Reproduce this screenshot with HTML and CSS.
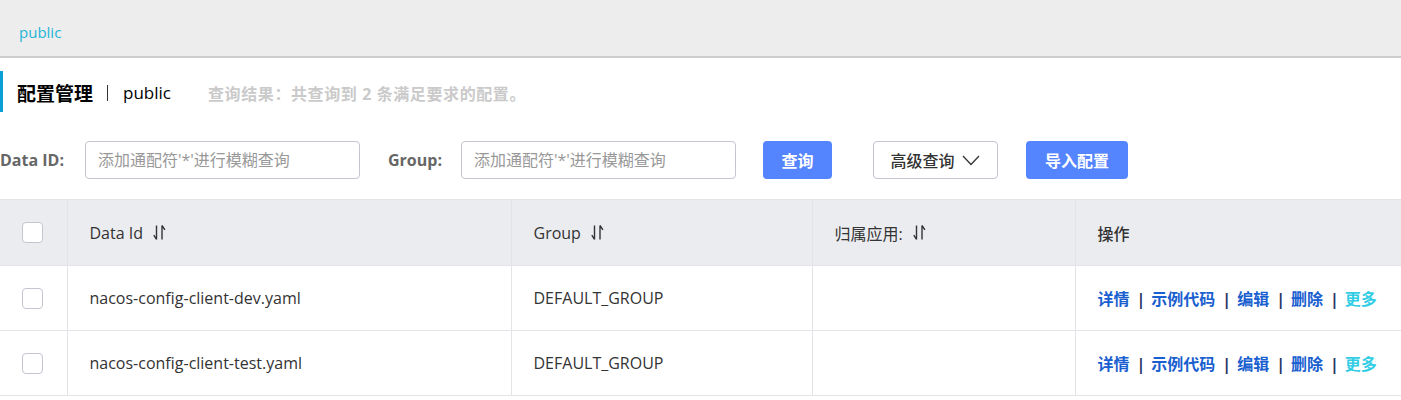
FILE: index.html
```html
<!DOCTYPE html>
<html lang="zh-CN">
<head>
<meta charset="utf-8">
<title>配置管理</title>
<link rel="stylesheet" href="styles.css">
</head>
<body>
<div class="topbar"><span class="ns-link">public</span></div>

<div class="page-title">
  <span class="title-main">配置管理</span>
  <span class="title-sep"></span>
  <span class="title-ns">public</span>
  <span class="title-summary">查询结果：共查询到 2 条满足要求的配置。</span>
</div>

<div class="search-row">
  <label class="field-label">Data ID:</label>
  <input class="text-input" type="text" placeholder="添加通配符'*'进行模糊查询">
  <label class="field-label group-label">Group:</label>
  <input class="text-input" type="text" placeholder="添加通配符'*'进行模糊查询">
  <button class="btn btn-primary btn-query">查询</button>
  <button class="btn btn-normal btn-advanced">高级查询
    <svg class="chev" width="18" height="11" viewBox="0 0 18 11"><path d="M1 1l8 8.5L17 1" stroke="#333" stroke-width="1.3" fill="none"/></svg>
  </button>
  <button class="btn btn-primary btn-import">导入配置</button>
</div>

<table class="cfg-table">
  <colgroup>
    <col class="c-check"><col class="c-id"><col class="c-group"><col class="c-app"><col>
  </colgroup>
  <thead>
    <tr>
      <th class="check-cell"><span class="checkbox"></span></th>
      <th><span class="th-inner">Data Id <svg class="sort" width="13" height="17" viewBox="0 0 13 17"><path d="M3.5 1.5v14M3.5 15.5L0.8 11.2M9 15.5v-14M9 1.5l2.9 4.3" stroke="#333" stroke-width="1.4" fill="none"/></svg></span></th>
      <th><span class="th-inner">Group <svg class="sort" width="13" height="17" viewBox="0 0 13 17"><path d="M3.5 1.5v14M3.5 15.5L0.8 11.2M9 15.5v-14M9 1.5l2.9 4.3" stroke="#333" stroke-width="1.4" fill="none"/></svg></span></th>
      <th><span class="th-inner">归属应用: <svg class="sort" width="13" height="17" viewBox="0 0 13 17"><path d="M3.5 1.5v14M3.5 15.5L0.8 11.2M9 15.5v-14M9 1.5l2.9 4.3" stroke="#333" stroke-width="1.4" fill="none"/></svg></span></th>
      <th class="th-op">操作</th>
    </tr>
  </thead>
  <tbody>
    <tr>
      <td class="check-cell"><span class="checkbox"></span></td>
      <td>nacos-config-client-dev.yaml</td>
      <td>DEFAULT_GROUP</td>
      <td></td>
      <td class="ops"><a>详情</a><span class="sep">|</span><a>示例代码</a><span class="sep">|</span><a>编辑</a><span class="sep">|</span><a>删除</a><span class="sep">|</span><a class="more">更多</a></td>
    </tr>
    <tr>
      <td class="check-cell"><span class="checkbox"></span></td>
      <td>nacos-config-client-test.yaml</td>
      <td>DEFAULT_GROUP</td>
      <td></td>
      <td class="ops"><a>详情</a><span class="sep">|</span><a>示例代码</a><span class="sep">|</span><a>编辑</a><span class="sep">|</span><a>删除</a><span class="sep">|</span><a class="more">更多</a></td>
    </tr>
  </tbody>
</table>
</body>
</html>
```
FILE: styles.css
```css
* { box-sizing: border-box; }
html, body { margin: 0; padding: 0; background: #fff; }
body {
  font-family: "Open Sans", "Noto Sans CJK SC", sans-serif;
  font-size: 16px;
  color: #333;
  overflow: hidden;
}

.topbar {
  height: 58px;
  background: #ededed;
  border-bottom: 2px solid #cdcdcd;
  display: flex;
  align-items: center;
  padding: 8px 0 0 19px;
}
.ns-link { color: #1fb5d7; font-size: 15px; }

.page-title {
  margin-top: 13px;
  height: 41px;
  border-left: 3px solid #0a9fd6;
  display: flex;
  align-items: center;
  padding: 2px 0 0 14px;
}
.title-main { font-size: 19px; font-weight: 700; color: #000; }
.title-sep {
  width: 1px; height: 16px; background: #333;
  margin: 0 15px 0 14px;
}
.title-ns { font-size: 17px; color: #000; }
.title-summary {
  margin-left: 37px;
  font-size: 16px;
  font-weight: 700;
  color: #cacaca;
  letter-spacing: 0.6px;
}

.search-row {
  margin-top: 29px;
  height: 38px;
  display: flex;
  align-items: center;
}
.field-label {
  font-weight: 700;
  color: #666;
  font-size: 16px;
  margin-right: 21px;
}
.group-label { margin-left: 28px; margin-right: 19px; }
.text-input {
  width: 275px;
  height: 38px;
  border: 1px solid #c4c6cf;
  border-radius: 4px;
  padding: 0 12px;
  font-family: inherit;
  font-size: 16px;
  color: #333;
  outline: none;
}
.text-input::placeholder { color: #999; }

.btn {
  height: 38px;
  border-radius: 4px;
  font-family: inherit;
  font-size: 16px;
  font-weight: 700;
  display: inline-flex;
  align-items: center;
  justify-content: center;
  padding: 0;
}
.btn-primary { background: #5584ff; color: #fff; border: none; }
.btn-query { width: 69px; margin-left: 27px; }
.btn-normal { background: #fff; color: #333; border: 1px solid #c4c6cf; font-weight: 500; }
.btn-advanced { width: 125px; margin-left: 41px; gap: 8px; }
.btn-import { width: 102px; margin-left: 28px; }

.cfg-table {
  margin-top: 20px;
  width: 100%;
  border-collapse: collapse;
  table-layout: fixed;
}
.c-check { width: 67px; }
.c-id { width: 444px; }
.c-group { width: 301px; }
.c-app { width: 263px; }

.cfg-table th, .cfg-table td {
  border: 1px solid #e3e4e8;
  text-align: left;
  padding: 0 0 0 22px;
  font-size: 16px;
  color: #333;
  white-space: nowrap;
}
.cfg-table tr > :first-child { border-left: none; }
.cfg-table tr > :last-child { border-right: none; }
.cfg-table th {
  height: 66px;
  background: #ebecf0;
  font-weight: 400;
}
.cfg-table td { height: 65px; }
.th-op { font-weight: 500 !important; }
.th-inner { display: inline-flex; align-items: center; gap: 10px; }
.sort { display: block; }

.cfg-table .check-cell { padding: 0 0 0 22px; }
.checkbox {
  display: block;
  width: 21px;
  height: 21px;
  border: 1px solid #c4c6cf;
  border-radius: 4px;
  background: #fff;
}

.ops a { color: #1a5fcf; font-weight: 700; cursor: pointer; }
.ops a.more { color: #33cde5; }
.ops .sep { color: #2b3566; font-weight: 700; margin: 0 6px 0 7px; }
```
